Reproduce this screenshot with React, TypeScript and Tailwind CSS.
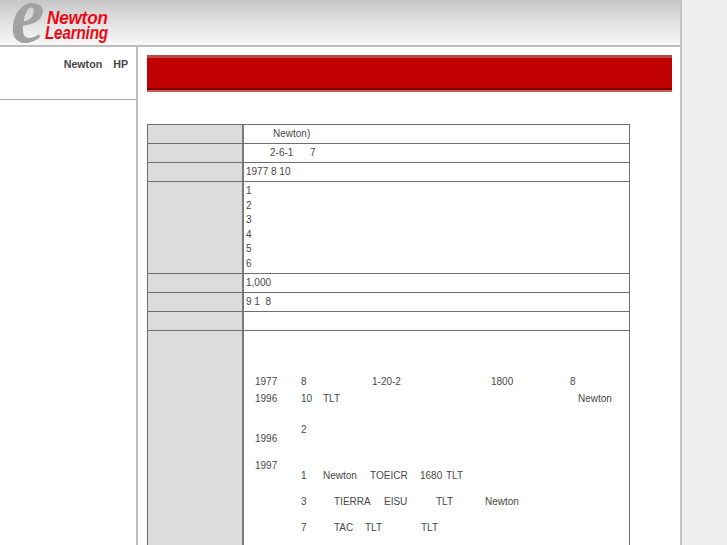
export default function App() {
  const rowCls = "flex h-[19px] border-b border-[#6f6f6f]";
  const labelCls = "w-[96px] shrink-0 bg-[#dcdcdc] border-r-2 border-[#7a7a7a]";
  return (
    <div className="flex h-[545px] w-[727px] overflow-hidden bg-[#efefef] text-[10px] leading-[17px] text-[#484848] font-['Liberation_Sans',Arial,sans-serif]">
      <div className="flex h-[545px] w-[682px] shrink-0 flex-col border-r-2 border-[#c4c4c4] bg-white">
        <header className="flex h-[47px] shrink-0 border-b-2 border-[#bdbdbd] bg-gradient-to-b from-[#c6c6c6] via-[#e2e2e2] to-[#f8f8f8] pl-[11px]">
          <span className="h-[45px] w-[36px] origin-left scale-x-[0.92] font-['Liberation_Serif',serif] text-[82px] leading-[29px] font-bold italic text-[#a2a2a2]">e</span>
          <div className="flex flex-col pt-[10px] font-bold italic text-[#ee0a14]">
            <span className="origin-left scale-x-[0.9] text-[19px] leading-[15px] tracking-[-0.2px] whitespace-nowrap">Newton</span>
            <span className="ml-[-2px] origin-left scale-x-[0.8] text-[19px] leading-[15px] tracking-[-0.2px] whitespace-nowrap">Learning</span>
          </div>
        </header>
        <div className="flex min-h-0 flex-1">
          <aside className="w-[138px] shrink-0 border-r-2 border-[#bdbdbd]">
            <div className="flex h-[53px] justify-end border-b border-[#a8a8a8] pt-[9px] pr-[8px] text-[10.67px] font-bold text-[#444]">
              <span>Newton</span>
              <span className="ml-[11px]">HP</span>
            </div>
          </aside>
          <main className="min-w-0 flex-1 pt-[8px] pl-[9px]">
            <div className="flex h-[37px] w-[525px] flex-col bg-[#c00000]">
              <div className="h-[3px] bg-[#b84a4a]" />
              <div className="flex-1" />
              <div className="h-[2px] bg-[#780000]" />
              <div className="h-[2px] bg-[#cf5a5a]" />
            </div>
            <div className="mt-[32px] w-[483px] border-t border-l border-r border-[#6f6f6f]">
              <div className={rowCls}>
                <div className={labelCls} />
                <div className="pl-[29px]">Newton)</div>
              </div>
              <div className={rowCls}>
                <div className={labelCls} />
                <div className="flex pl-[26px]">
                  <span className="w-[40px]">2-6-1</span>
                  <span>7</span>
                </div>
              </div>
              <div className={rowCls}>
                <div className={labelCls} />
                <div className="pl-[2px] whitespace-pre">1977 8 10</div>
              </div>
              <div className="flex h-[92px] border-b border-[#6f6f6f]">
                <div className={labelCls} />
                <div className="pt-[2px] pl-[2px] leading-[14.6px]">
                  <div>1</div>
                  <div>2</div>
                  <div>3</div>
                  <div>4</div>
                  <div>5</div>
                  <div>6</div>
                </div>
              </div>
              <div className={rowCls}>
                <div className={labelCls} />
                <div className="pl-[2px]">1,000</div>
              </div>
              <div className={rowCls}>
                <div className={labelCls} />
                <div className="pl-[2px] whitespace-pre">9 1  8</div>
              </div>
              <div className={rowCls}>
                <div className={labelCls} />
              </div>
              <div className="flex h-[300px]">
                <div className={labelCls} />
                <div className="flex-1 pt-[42px] pl-[11px]">
                  <div className="flex h-[17px]">
                    <span className="w-[46px]">1977</span>
                    <span className="w-[71px]">8</span>
                    <span className="w-[119px]">1-20-2</span>
                    <span className="w-[79px]">1800</span>
                    <span>8</span>
                  </div>
                  <div className="flex h-[17px]">
                    <span className="w-[46px]">1996</span>
                    <span className="w-[22px]">10</span>
                    <span className="w-[255px]">TLT</span>
                    <span>Newton</span>
                  </div>
                  <div className="flex h-[50px]">
                    <span className="w-[46px] pt-[23px]">1996</span>
                    <span className="pt-[14px]">2</span>
                  </div>
                  <div className="flex">
                    <span className="w-[46px]">1997</span>
                    <div className="flex flex-col gap-[9px] pt-[10px]">
                      <div className="flex">
                        <span className="w-[22px]">1</span>
                        <span className="w-[47px]">Newton</span>
                        <span className="w-[50px]">TOEICR</span>
                        <span className="w-[26px]">1680</span>
                        <span>TLT</span>
                      </div>
                      <div className="flex">
                        <span className="w-[33px]">3</span>
                        <span className="w-[50px]">TIERRA</span>
                        <span className="w-[52px]">EISU</span>
                        <span className="w-[49px]">TLT</span>
                        <span>Newton</span>
                      </div>
                      <div className="flex">
                        <span className="w-[33px]">7</span>
                        <span className="w-[31px]">TAC</span>
                        <span className="w-[56px]">TLT</span>
                        <span>TLT</span>
                      </div>
                    </div>
                  </div>
                </div>
              </div>
            </div>
          </main>
        </div>
      </div>
    </div>
  );
}
